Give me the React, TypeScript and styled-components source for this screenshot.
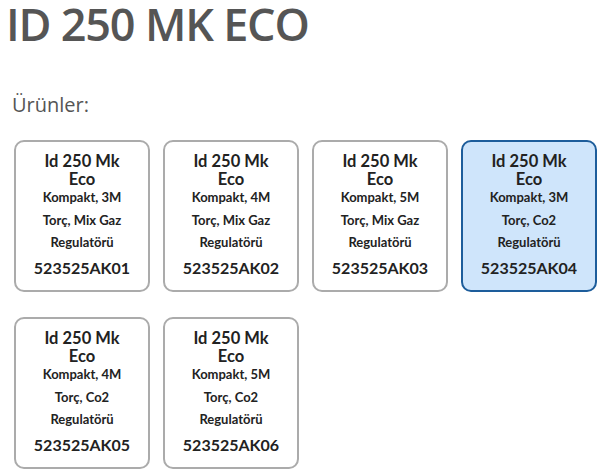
import React from "react";
import styled, { createGlobalStyle } from "styled-components";

const Global = createGlobalStyle`
  body {
    margin: 0;
    padding: 0 8px 8px;
    background: #ffffff;
    font-family: "Open Sans", "Liberation Sans", sans-serif;
  }
`;

const Page = styled.div`
  display: flex;
  flex-direction: column;
`;

const Title = styled.h1`
  margin: -7px 0 0 -2px;
  font-family: "Open Sans", sans-serif;
  font-weight: 600;
  font-size: 45px;
  line-height: 62px;
  letter-spacing: -1.2px;
  color: #555555;
`;

const Label = styled.div`
  margin: 36px 0 0 4px;
  font-family: "Open Sans", sans-serif;
  font-size: 20px;
  line-height: 28px;
  color: #555555;
`;

const Grid = styled.div`
  margin: 21px 0 0 6px;
  display: grid;
  grid-template-columns: repeat(4, 136px);
  column-gap: 13px;
  row-gap: 25px;
`;

const Card = styled.div<{ $selected?: boolean }>`
  box-sizing: border-box;
  height: 152px;
  border: 2px solid ${(p) => (p.$selected ? "#1d5d9b" : "#ababab")};
  background: ${(p) => (p.$selected ? "#cfe5fb" : "#ffffff")};
  border-radius: 10px;
  display: flex;
  flex-direction: column;
  align-items: center;
  text-align: center;
  padding-top: 9.6px;
  font-family: "Lato", "Source Sans Pro", sans-serif;
  color: #222222;
`;

const Name = styled.div`
  max-width: 90px;
  font-weight: 700;
  font-size: 16.5px;
  line-height: 18px;
`;

const Desc = styled.div`
  max-width: 96px;
  margin-top: -1.2px;
  font-weight: 700;
  font-size: 13px;
  line-height: 22.5px;
`;

const Code = styled.div`
  margin-top: 1.9px;
  font-weight: 700;
  font-size: 16px;
  line-height: 24px;
`;

const products = [
  { len: "3M", gas: "Mix Gaz", code: "523525AK01" },
  { len: "4M", gas: "Mix Gaz", code: "523525AK02" },
  { len: "5M", gas: "Mix Gaz", code: "523525AK03" },
  { len: "3M", gas: "Co2", code: "523525AK04", selected: true },
  { len: "4M", gas: "Co2", code: "523525AK05" },
  { len: "5M", gas: "Co2", code: "523525AK06" },
];

export default function App() {
  return (
    <Page>
      <Global />
      <Title>ID 250 MK ECO</Title>
      <Label>Ürünler:</Label>
      <Grid>
        {products.map((p) => (
          <Card key={p.code} $selected={p.selected}>
            <Name>Id 250 Mk Eco</Name>
            <Desc>
              Kompakt, {p.len} Torç, {p.gas} Regulatörü
            </Desc>
            <Code>{p.code}</Code>
          </Card>
        ))}
      </Grid>
    </Page>
  );
}
